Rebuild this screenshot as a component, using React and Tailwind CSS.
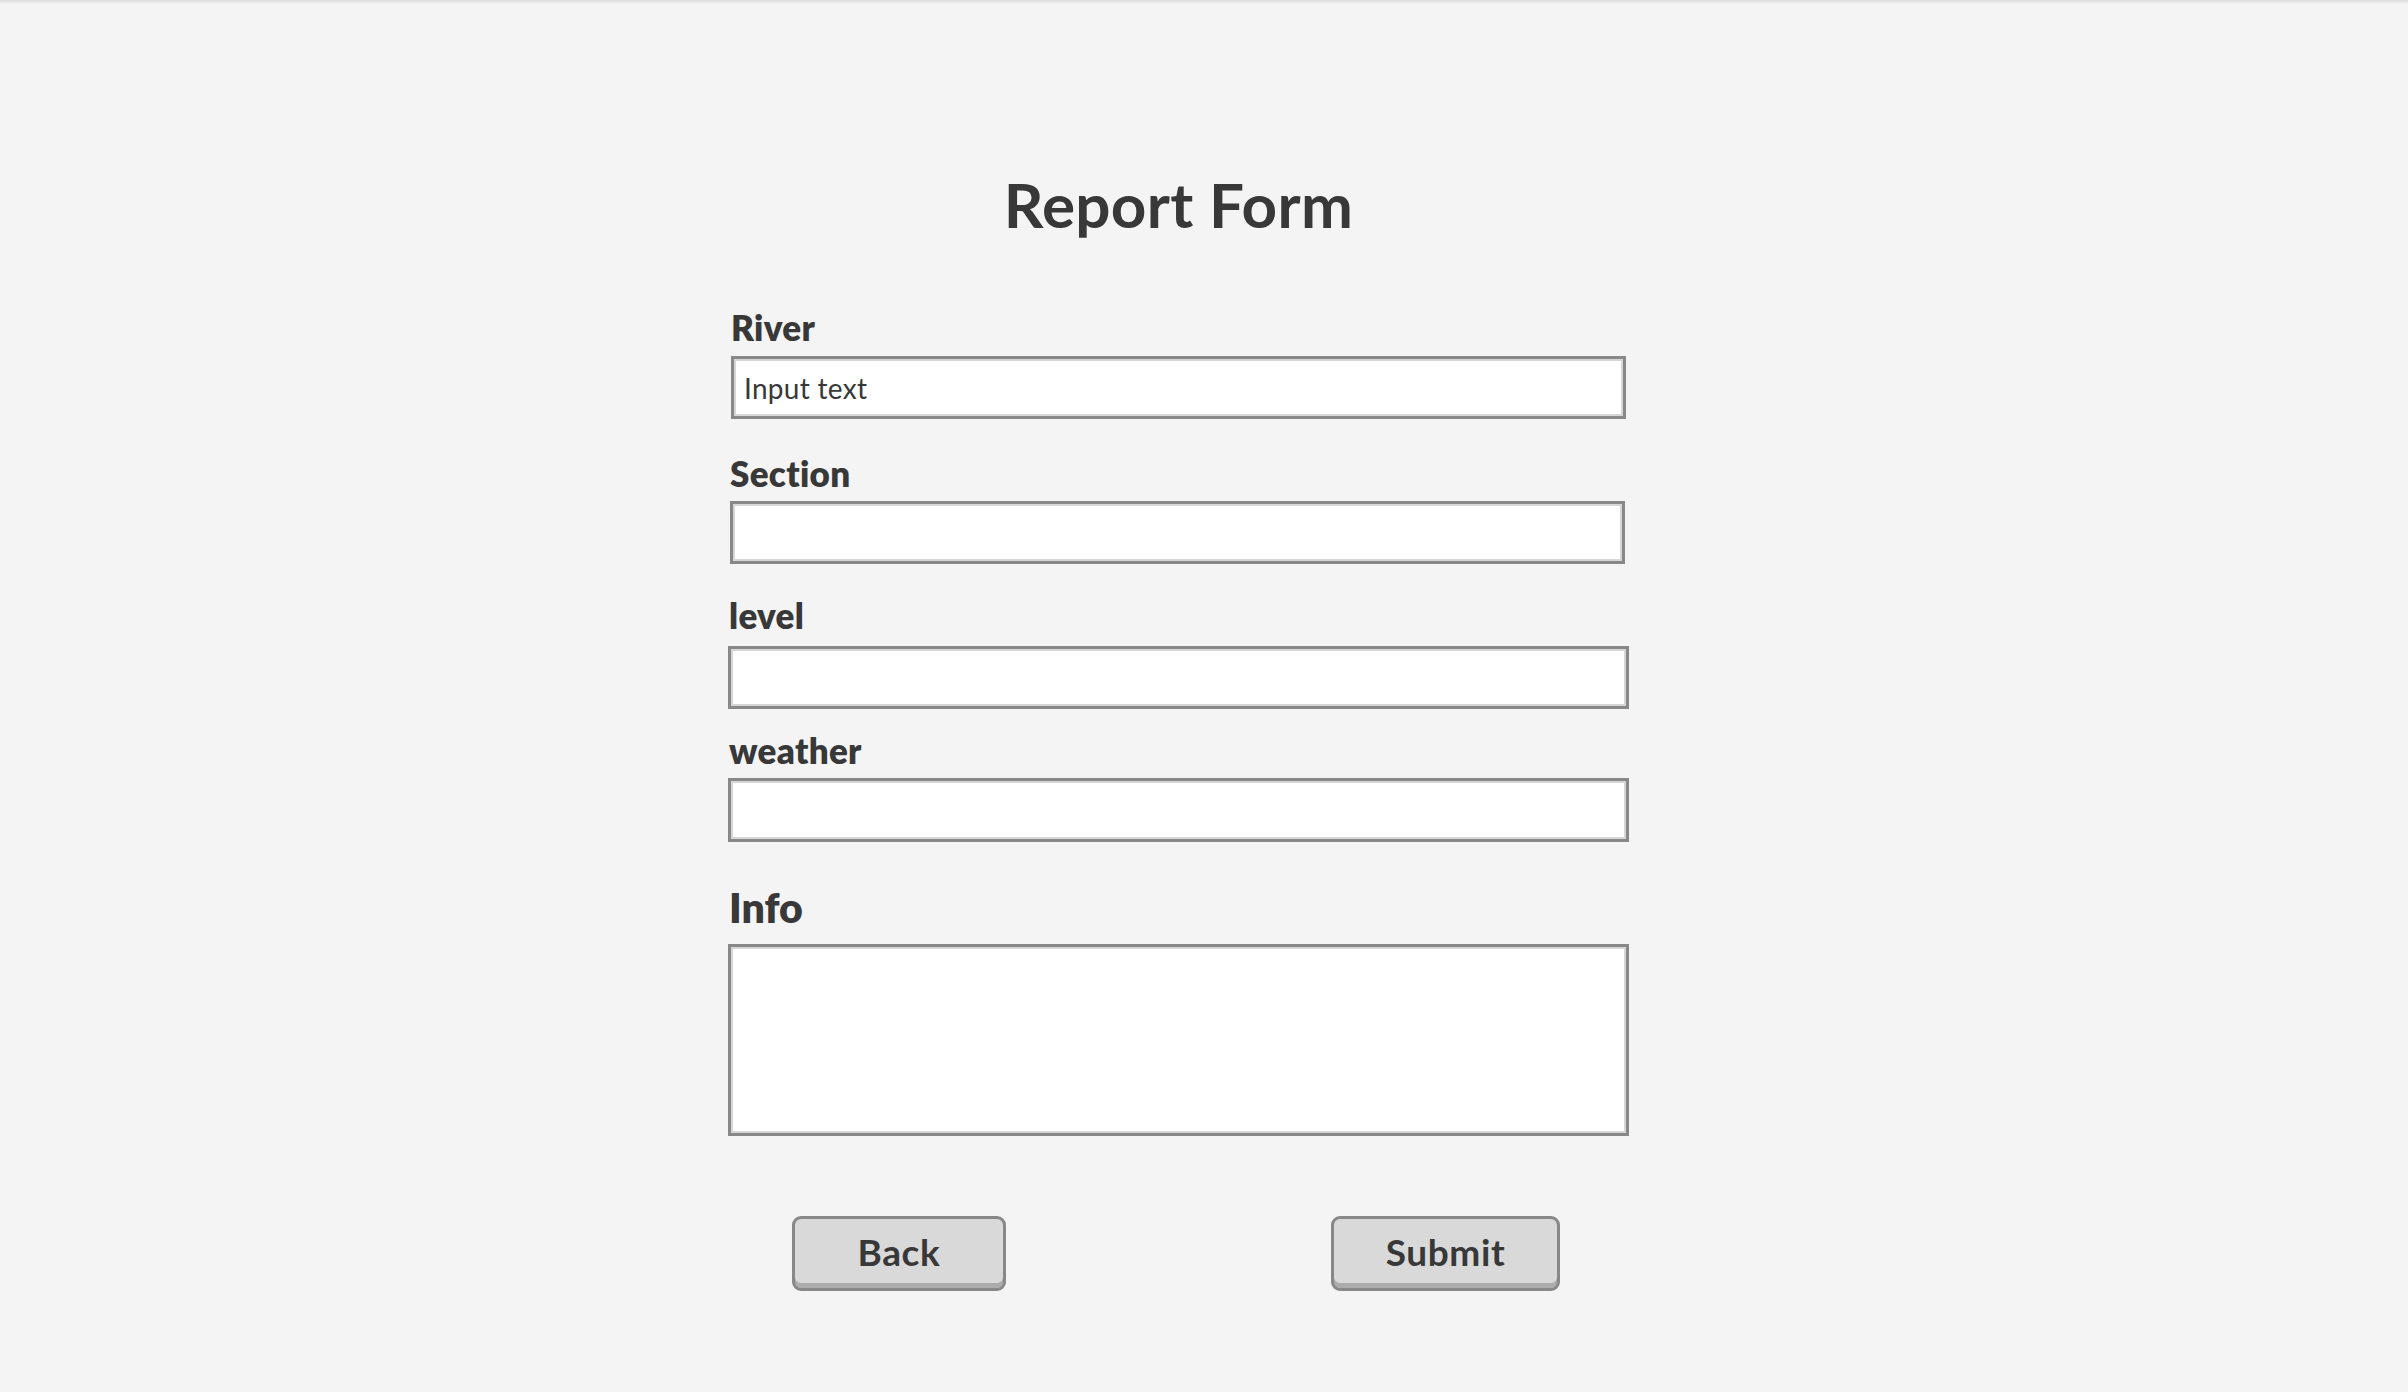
import { useState } from "react";

const font = { fontFamily: "Lato, 'Noto Sans', sans-serif" };

const boxCls =
  "block bg-white border-[3px] border-[#888888] shadow-[inset_0_0_0_2px_#d6d6d6] outline-none text-[#383838]";

function Field({ label, value, onChange, className = "", inputCls = "", placeholder }) {
  return (
    <div className={className}>
      <label className="block text-[35px] leading-[34px] font-extrabold tracking-[0.3px] text-[#383838]">
        {label}
      </label>
      <input
        value={value}
        onChange={(e) => onChange(e.target.value)}
        placeholder={placeholder}
        className={`${boxCls} h-[63px] px-[10px] text-[28px] tracking-[0.3px] ${inputCls}`}
      />
    </div>
  );
}

export default function App() {
  const [form, setForm] = useState({
    river: "Input text",
    section: "",
    level: "",
    weather: "",
    info: ""
  });

  const set = (key) => (val) => setForm((prev) => ({ ...prev, [key]: val }));

  return (
    <div className="h-screen overflow-hidden bg-[#f4f4f4]" style={font}>
      {/* thin top shade */}
      <div className="h-[4px] bg-gradient-to-b from-[#dcdcdc] to-[#f4f4f4]" />

      <div className="ml-[728px] w-[901px] pt-[169px]">
        <h1 className="text-center text-[62px] leading-[62px] font-bold tracking-[0.3px] text-[#383838]">
          Report Form
        </h1>

        {/* Fields */}
        <Field
          label="River"
          value={form.river}
          onChange={set("river")}
          className="mt-[75px] pl-[3px] [&>label]:mb-[12px]"
          inputCls="w-[895px]"
        />
        <Field
          label="Section"
          value={form.section}
          onChange={set("section")}
          className="mt-[37px] pl-[2px] [&>label]:mb-[11px]"
          inputCls="w-[895px]"
        />
        <Field
          label="level"
          value={form.level}
          onChange={set("level")}
          className="mt-[34px] [&>label]:mb-[14px] [&>label]:pl-[1px]"
          inputCls="w-[901px]"
        />
        <Field
          label="weather"
          value={form.weather}
          onChange={set("weather")}
          className="mt-[24px] [&>label]:mb-[11px] [&>label]:pl-[1px]"
          inputCls="w-[901px] h-[64px]"
        />

        <div className="mt-[46px]">
          <label className="block pl-[1px] text-[41px] leading-[40px] font-extrabold text-[#383838]">Info</label>
          <textarea
            value={form.info}
            onChange={(e) => set("info")(e.target.value)}
            className={`${boxCls} mt-[16px] w-[901px] h-[192px] resize-none p-[10px] text-[28px]`}
          />
        </div>

        {/* Buttons */}
        <div className="mt-[80px] flex">
          <button className="ml-[64px] w-[214px] h-[75px] rounded-[9px] bg-[#d9d9d9] border-[3px] border-[#888888] shadow-[inset_0_-5px_0_#acacac] pb-[4px] text-[37px] font-bold tracking-[0.6px] text-[#383838]">
            Back
          </button>
          <button className="ml-[325px] w-[229px] h-[75px] rounded-[9px] bg-[#d9d9d9] border-[3px] border-[#888888] shadow-[inset_0_-5px_0_#acacac] pb-[4px] text-[37px] font-bold tracking-[0.6px] text-[#383838]">
            Submit
          </button>
        </div>
      </div>
    </div>
  );
}
